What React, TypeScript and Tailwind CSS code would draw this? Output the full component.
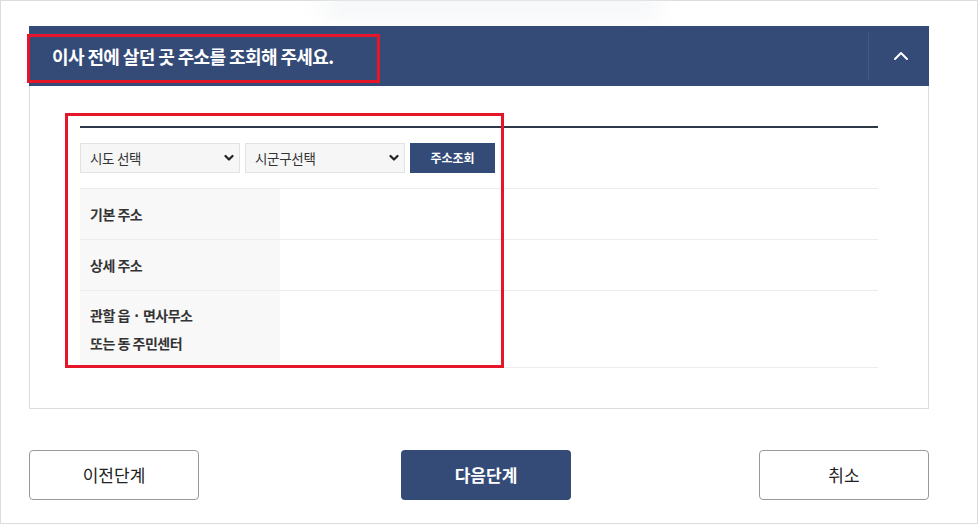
import React from "react";

const font = { fontFamily: '"Noto Sans CJK KR", "Noto Sans", sans-serif' };

function Chevron() {
  return (
    <svg width="10" height="8" viewBox="0 0 10 8" className="shrink-0">
      <path d="M1.5 2 L5 5.5 L8.5 2" fill="none" stroke="#222" strokeWidth="2.2" strokeLinecap="round" strokeLinejoin="round" />
    </svg>
  );
}

function SelectBox({ label }: { label: string }) {
  return (
    <div className="w-[160px] h-[30px] bg-[#f6f6f6] border border-[#e2e2e2] flex items-center justify-between pl-[9px] pr-[5px] text-[13.5px] text-[#333] tracking-[-0.3px]">
      <span>{label}</span>
      <Chevron />
    </div>
  );
}

function Row({ children, h }: { children: React.ReactNode; h: string }) {
  return (
    <div className={`flex border-b border-[#ececec] ${h}`}>
      <div className="w-[200px] bg-[#f8f8f8] pl-[10px] flex flex-col justify-center text-[14px] font-bold text-[#333] leading-[28px] tracking-[-0.5px]">
        {children}
      </div>
      <div className="flex-1" />
    </div>
  );
}

export default function App() {
  return (
    <div className="w-[978px] h-[524px] bg-white border border-[#dcdcdc] pt-[25px] px-[28px] relative" style={font}>
      <div className="absolute left-[320px] top-[-6px] w-[340px] h-[22px] rounded-full bg-[#eef0f3] blur-md opacity-70" />
      <div className="w-[900px] relative">
        <div className="h-[60px] bg-[#344b78] flex items-center">
          <div className="flex-1 pl-[23px] text-white text-[18px] font-bold tracking-[-0.6px]">
            이사 전에 살던 곳 주소를 조회해 주세요.
          </div>
          <div className="w-px h-[47px] bg-[#41588a]" />
          <div className="w-[60px] flex items-center justify-center pl-[3px]">
            <svg width="16" height="10" viewBox="0 0 16 10">
              <path d="M2 8 L8 2 L14 8" fill="none" stroke="#fff" strokeWidth="2" strokeLinecap="round" strokeLinejoin="round" />
            </svg>
          </div>
        </div>
        <div className="absolute left-[-2px] top-[8px] w-[353px] h-[49px] border-[3px] border-[#e5162a]" />
        <div className="border-x border-b border-[#dcdcdc] pl-[50px] pr-[50px] pt-[40px] pb-[40px] relative">
          <div className="h-[2px] bg-[#2e3848]" />
          <div className="flex gap-[5px] mt-[15px] mb-[15px]">
            <SelectBox label="시도 선택" />
            <SelectBox label="시군구선택" />
            <div className="w-[85px] h-[30px] bg-[#344b78] text-white text-[12px] font-bold flex items-center justify-center">
              주소조회
            </div>
          </div>
          <div className="border-t border-[#ececec]">
            <Row h="h-[51px]">기본 주소</Row>
            <Row h="h-[51px]">상세 주소</Row>
            <Row h="h-[77px]">
              <span>관할 읍 · 면사무소</span>
              <span>또는 동 주민센터</span>
            </Row>
          </div>
          <div className="absolute left-[35px] top-[27px] w-[439px] h-[255px] border-[3px] border-[#e5162a]" />
        </div>
        <div className="flex items-center mt-[41px]">
          <div className="w-[170px] h-[50px] border border-[#999] rounded-[4px] flex items-center justify-center text-[17px] text-[#222]">이전단계</div>
          <div className="w-[170px] h-[50px] ml-[202px] bg-[#344b78] rounded-[4px] flex items-center justify-center text-[17px] font-bold text-white">다음단계</div>
          <div className="w-[170px] h-[50px] ml-[188px] border border-[#999] rounded-[4px] flex items-center justify-center text-[17px] text-[#222]">취소</div>
        </div>
      </div>
    </div>
  );
}
